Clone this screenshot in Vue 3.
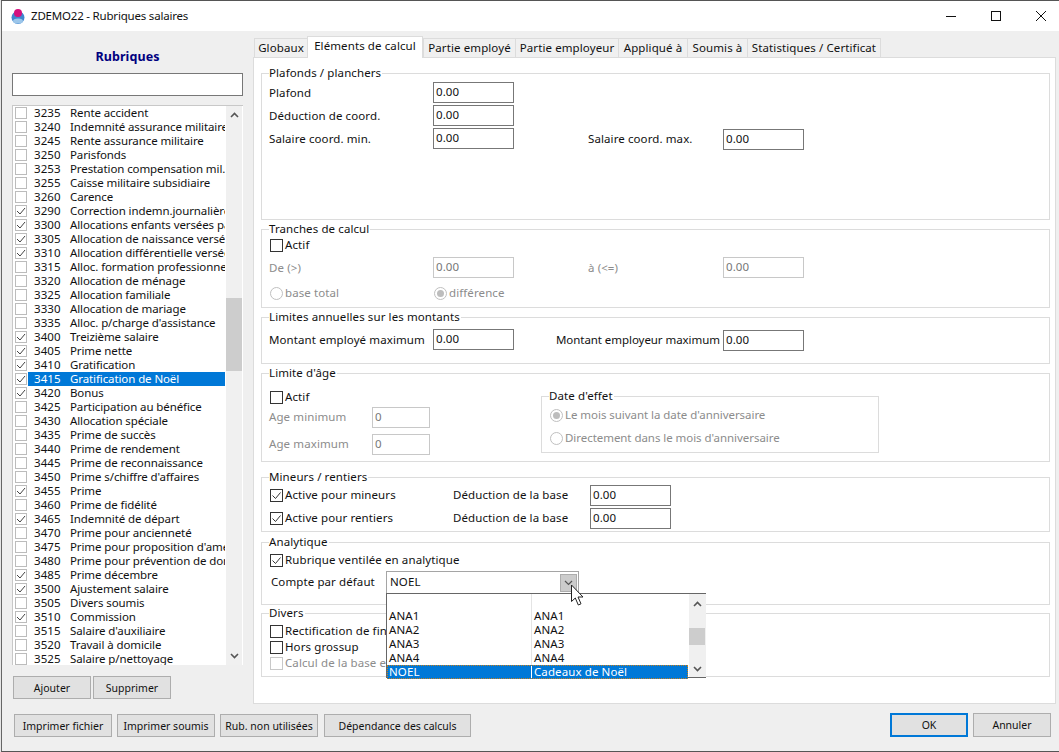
<script setup>
const rows = [
  ['3235','Rente accident',0],['3240','Indemnité assurance militaire',0],['3245','Rente assurance militaire',0],
  ['3250','Parisfonds',0],['3253','Prestation compensation mil.',0],['3255','Caisse militaire subsidiaire',0],
  ['3260','Carence',0],['3290','Correction indemn.journalière',1],['3300','Allocations enfants versées par',1],
  ['3305','Allocation de naissance versée',1],['3310','Allocation différentielle versée',1],['3315','Alloc. formation professionnelle',0],
  ['3320','Allocation de ménage',0],['3325','Allocation familiale',0],['3330','Allocation de mariage',0],
  ['3335',"Alloc. p/charge d'assistance",0],['3400','Treizième salaire',1],['3405','Prime nette',1],
  ['3410','Gratification',1],['3415','Gratification de Noël',1],['3420','Bonus',1],
  ['3425','Participation au bénéfice',0],['3430','Allocation spéciale',0],['3435','Prime de succès',0],
  ['3440','Prime de rendement',0],['3445','Prime de reconnaissance',0],['3450',"Prime s/chiffre d'affaires",0],
  ['3455','Prime',1],['3460','Prime de fidélité',0],['3465','Indemnité de départ',1],
  ['3470','Prime pour ancienneté',0],['3475',"Prime pour proposition d'amélioration",0],['3480','Prime pour prévention de dommages',0],
  ['3485','Prime décembre',1],['3500','Ajustement salaire',1],['3505','Divers soumis',0],
  ['3510','Commission',1],['3515',"Salaire d'auxiliaire",0],['3520','Travail à domicile',0],['3525','Salaire p/nettoyage',0]
]
const tabs = ['Globaux','Eléments de calcul','Partie employé','Partie employeur','Appliqué à','Soumis à','Statistiques / Certificat']
const drop = [['',''],['ANA1','ANA1'],['ANA2','ANA2'],['ANA3','ANA3'],['ANA4','ANA4']]
</script>

<template>
  <div class="app">
    <div class="window">
      <header class="titlebar">
        <svg class="logo" width="16" height="17" viewBox="0 0 16 17">
          <circle cx="8" cy="9.5" r="6.5" fill="#3f86cf"/>
          <ellipse cx="8" cy="13" rx="5" ry="2.6" fill="#9cc6ea"/>
          <circle cx="8" cy="5" r="4" fill="#d4117f"/>
        </svg>
        <span class="wintitle">ZDEMO22 - Rubriques salaires</span>
        <svg class="winbtn first" width="12" height="12" viewBox="0 0 12 12"><path d="M1 6.5H11" stroke="#111" fill="none"/></svg>
        <svg class="winbtn" width="12" height="12" viewBox="0 0 12 12"><rect x="1.5" y="1.5" width="9" height="9" stroke="#111" fill="none"/></svg>
        <svg class="winbtn" width="12" height="12" viewBox="0 0 12 12"><path d="M1 1L11 11M11 1L1 11" stroke="#111" fill="none"/></svg>
      </header>

      <div class="main">
        <aside class="left">
          <h2 class="heading">Rubriques</h2>
          <div class="search"></div>
          <div class="list">
            <div class="rows">
              <div v-for="(r, i) in rows" :key="r[0]" class="lrow">
                <span class="lcb">
                  <svg v-if="r[2]" width="10" height="10" viewBox="0 0 10 10"><path d="M1 5L4 8L9 2" stroke="#444" fill="none"/></svg>
                </span>
                <span class="litem" :class="{ sel: i === 19 }">
                  <span class="lnum">{{ r[0] }}</span><span class="lname">{{ r[1] }}</span>
                </span>
              </div>
            </div>
            <div class="vbar">
              <svg class="chev" width="9" height="6" viewBox="0 0 9 6"><path d="M1 5L4.5 1.5L8 5" stroke="#555" stroke-width="1.6" fill="none"/></svg>
              <div class="thumb"></div>
              <svg class="chev down" width="9" height="6" viewBox="0 0 9 6"><path d="M1 1L4.5 4.5L8 1" stroke="#555" stroke-width="1.6" fill="none"/></svg>
            </div>
          </div>
          <div class="leftbtns">
            <button class="btn small">Ajouter</button>
            <button class="btn small">Supprimer</button>
          </div>
        </aside>

        <section class="right">
          <nav class="tabs">
            <span v-for="(t, i) in tabs" :key="t" class="tab" :class="['t' + i, { active: i === 1 }]">{{ t }}</span>
          </nav>
          <div class="panel">
            <div class="group g1">
              <span class="legend">Plafonds / planchers</span>
              <div class="grid5 first-row"><span>Plafond</span><span class="inp">0.00</span></div>
              <div class="grid5 next"><span>Déduction de coord.</span><span class="inp">0.00</span></div>
              <div class="grid5 next">
                <span>Salaire coord. min.</span><span class="inp">0.00</span><span></span>
                <span>Salaire coord. max.</span><span class="inp low">0.00</span>
              </div>
            </div>

            <div class="group g2">
              <span class="legend">Tranches de calcul</span>
              <label class="chk top2"><span class="cb"></span>Actif</label>
              <div class="grid5 dis mt4">
                <span>De (&gt;)</span><span class="inp off">0.00</span><span></span>
                <span>à (&lt;=)</span><span class="inp off">0.00</span>
              </div>
              <div class="grid-radio dis">
                <label class="chk"><span class="rd"></span>base total</label>
                <label class="chk"><span class="rd on"></span>différence</label>
              </div>
            </div>

            <div class="group g3">
              <span class="legend">Limites annuelles sur les montants</span>
              <div class="grid3">
                <span>Montant employé maximum</span><span class="inp">0.00</span>
                <span class="lab-emp">Montant employeur maximum</span><span class="inp low">0.00</span>
              </div>
            </div>

            <div class="group g4">
              <span class="legend">Limite d'âge</span>
              <div class="age">
                <div class="agecol">
                  <label class="chk top10"><span class="cb"></span>Actif</label>
                  <div class="agerow dis first-age"><span class="up">Age minimum</span><span class="inp off">0</span></div>
                  <div class="agerow dis second-age"><span class="up">Age maximum</span><span class="inp off">0</span></div>
                </div>
                <div class="dategroup">
                  <span class="legend">Date d'effet</span>
                  <label class="chk dis d1"><span class="rd on"></span>Le mois suivant la date d'anniversaire</label>
                  <label class="chk dis d2"><span class="rd"></span>Directement dans le mois d'anniversaire</label>
                </div>
              </div>
            </div>

            <div class="group g5">
              <span class="legend">Mineurs / rentiers</span>
              <div class="gridm first-m">
                <label class="chk"><span class="cb"><svg width="11" height="11" viewBox="0 0 11 11"><path d="M1.5 5.5L4.5 8.5L9.5 2.5" stroke="#333" fill="none"/></svg></span>Active pour mineurs</label>
                <span class="up">Déduction de la base</span><span class="inp">0.00</span>
              </div>
              <div class="gridm next">
                <label class="chk"><span class="cb"><svg width="11" height="11" viewBox="0 0 11 11"><path d="M1.5 5.5L4.5 8.5L9.5 2.5" stroke="#333" fill="none"/></svg></span>Active pour rentiers</label>
                <span class="up">Déduction de la base</span><span class="inp">0.00</span>
              </div>
            </div>

            <div class="group g6">
              <span class="legend">Analytique</span>
              <label class="chk top4"><span class="cb"><svg width="11" height="11" viewBox="0 0 11 11"><path d="M1.5 5.5L4.5 8.5L9.5 2.5" stroke="#333" fill="none"/></svg></span>Rubrique ventilée en analytique</label>
              <div class="comborow">
                <span class="combolab up">Compte par défaut</span>
                <div class="combo">
                  <span class="up">NOEL</span>
                  <span class="combobtn"><svg width="9" height="6" viewBox="0 0 9 6"><path d="M1 1L4.5 4.5L8 1" stroke="#555" stroke-width="1.2" fill="none"/></svg></span>
                </div>
              </div>
            </div>

            <div class="group g7">
              <span class="legend">Divers</span>
              <label class="chk top4"><span class="cb"></span>Rectification de fin</label>
              <label class="chk gap1"><span class="cb"></span>Hors grossup</label>
              <label class="chk gap1 dis"><span class="cb offcb"></span>Calcul de la base en</label>
            </div>

            <div class="dropdown">
              <div class="dropcols">
                <div v-for="d in drop" :key="d[0]" class="drow"><span class="dc1">{{ d[0] }}</span><span class="dc2">{{ d[1] }}</span></div>
                <div class="drow dsel"><span class="dc1">NOEL</span><span class="dc2 dsep">Cadeaux de Noël</span></div>
              </div>
              <div class="dbar">
                <svg class="dchev" width="9" height="6" viewBox="0 0 9 6"><path d="M1 5L4.5 1.5L8 5" stroke="#555" stroke-width="1.6" fill="none"/></svg>
                <div class="dthumb"></div>
                <svg class="dchev ddown" width="9" height="6" viewBox="0 0 9 6"><path d="M1 1L4.5 4.5L8 1" stroke="#555" stroke-width="1.6" fill="none"/></svg>
              </div>
            </div>
            <svg class="cursor" width="15" height="23" viewBox="0 0 15 23">
              <path d="M1.5 1V17.5L5.3 14L8.3 21L11 19.8L8 13H13Z" fill="#fff" stroke="#222" stroke-width="1"/>
            </svg>
          </div>
        </section>
      </div>

      <footer class="bottom">
        <button class="btn b1">Imprimer fichier</button>
        <button class="btn b1">Imprimer soumis</button>
        <button class="btn b1">Rub. non utilisées</button>
        <button class="btn b2">Dépendance des calculs</button>
        <button class="btn ok">OK</button>
        <button class="btn cancel">Annuler</button>
      </footer>
    </div>
  </div>
</template>

<style>
html, body { margin: 0; background: #efefef; }
</style>

<style scoped>
.app {
  width: 1059px; height: 752px; overflow: hidden; background: #e6e6e6;
  font-family: "Noto Sans", "Open Sans", sans-serif; font-size: 11.5px; letter-spacing: 0.1px; line-height: 14px; color: #111;
}
.window {
  box-sizing: border-box; margin-left: 1px; width: 1058px; height: 752px; background: #efefef;
  border-left: 1px solid #666; border-top: 1px solid #555; border-bottom: 1px solid #555;
}
.titlebar { height: 30px; background: #fff; display: flex; align-items: center; padding-left: 8px; line-height: 16px; }
.logo { flex: none; }
.wintitle { margin-left: 5px; letter-spacing: -0.2px; }
.winbtn { flex: none; margin-left: 33px; }
.winbtn.first { margin-left: auto; }
.winbtn:last-child { margin-right: 12px; }

.main { display: flex; height: 673px; }
.left { width: 231px; margin-left: 10px; flex: none; }
.heading { margin: 18px 0 0; height: 16px; line-height: 16px; text-align: center; font-size: 12.5px; font-weight: 700; color: #00007f; }
.search { box-sizing: border-box; height: 23px; margin-top: 8px; background: #fff; border: 1px solid #777; }
.list { margin-top: 9px; height: 560px; display: flex; background: #fff; border-top: 1px solid #c8c8c8; border-left: 1px solid #c8c8c8; box-sizing: border-box; overflow: hidden; }
.rows { width: 213px; flex: none; overflow: hidden; letter-spacing: -0.1px; }
.lrow { height: 14px; display: flex; align-items: center; }
.lcb { box-sizing: border-box; flex: none; margin-left: 2px; width: 12px; height: 12px; border: 1px solid #bcbcbc; background: #fff; display: flex; align-items: center; justify-content: center; }
.litem { margin-left: 1px; margin-right: 1px; flex: 1; height: 14px; line-height: 14px; min-width: 0; padding-left: 6px; display: flex; white-space: nowrap; overflow: hidden; }
.litem.sel { background: #0078d7; color: #fff; }
.lnum { flex: none; width: 36px; letter-spacing: 0.1px; }
.lname { flex: none; }
.vbar { width: 16px; flex: none; background: #f0f0f0; display: flex; flex-direction: column; align-items: center; position: relative; }
.chev { margin-top: 6px; flex: none; }
.thumb { position: absolute; left: 0; right: 0; top: 192px; height: 73px; background: #cdcdcd; }
.chev.down { margin-top: auto; margin-bottom: 6px; }
.leftbtns { margin: 11px 0 0 1px; display: flex; gap: 2px; }

.btn {
  box-sizing: border-box; font: inherit; font-size: 10.5px; letter-spacing: 0; color: #111; padding: 0; background: #e1e1e1;
  border: 1px solid #adadad; height: 23px; display: block; white-space: nowrap;
}
.small { width: 78px; }
.bottom { display: flex; align-items: flex-start; padding: 10px 8px 0 12px; gap: 5px; }
.b1 { width: 98px; }
.b2 { width: 147px; margin-left: 1px; }
.ok { width: 78px; height: 24px; margin-left: auto; margin-top: -1px; border: 2px solid #0078d7; }
.cancel { width: 78px; height: 24px; margin-top: -1px; }

.right { margin-left: 10px; width: 803px; flex: none; padding-top: 5px; }
.tabs { display: flex; align-items: flex-end; height: 21px; padding-left: 1px; }
.tab { box-sizing: border-box; height: 19px; line-height: 17px; background: #f0f0f0; border: 1px solid #dcdcdc; border-bottom: 0; border-right: 0; text-align: center; white-space: nowrap; }
.tab.active { background: #fff; line-height: 17px; border-right: 1px solid #dcdcdc; margin-bottom: -1px; position: relative; z-index: 1; height: 22px; }
.t0 { width: 53px; } .t1 { width: 116px; } .t2 { width: 92px; } .t3 { width: 103px; }
.t4 { width: 69px; } .t5 { width: 60px; } .t6 { width: 134px; border-right: 1px solid #dcdcdc; }
.panel { box-sizing: border-box; height: 647px; background: #fff; border: 1px solid #dcdcdc; padding: 15px 0 0 7px; position: relative; }

.group { box-sizing: border-box; width: 789px; border: 1px solid #dcdcdc; padding-left: 7px; }
.legend { display: block; width: fit-content; height: 14px; line-height: 14px; margin: -8px 0 0 0; background: #fff; padding-right: 1px; color: #111; }
.g1 { height: 147px; margin-bottom: 9px; }
.g2 { height: 79px; margin-bottom: 9px; }
.g3 { height: 47px; margin-bottom: 9px; }
.g4 { height: 89px; margin-bottom: 15px; }
.g5 { height: 55px; margin-bottom: 10px; }
.g6 { height: 63px; margin-bottom: 8px; }
.g7 { height: 64px; }

.grid5 { display: grid; grid-template-columns: 164px 81px 74px 135px 81px; align-items: center; height: 21px; }
.first-row { margin-top: 2px; }
.first-m { margin-top: 1px; }
.next { margin-top: 2px; }
.mt4 { margin-top: 4px; }
.up { padding-bottom: 2px; }
.inp { box-sizing: border-box; display: block; height: 21px; line-height: 17px; border: 1px solid #777; background: #fff; padding-left: 2px; }
.inp.off { border-color: #c8c8c8; color: #777; background: #fff; }
.low { position: relative; top: 1px; }
.dis { color: #8c8c8c; }
.chk { display: flex; align-items: flex-start; height: 15px; line-height: 13px; white-space: nowrap; padding-left: 1px; }
.top2 { margin-top: 2px; }
.top10 { margin-top: 10px; }
.top4 { margin-top: 4px; }
.gap1 { margin-top: 1px; }
.cb { box-sizing: border-box; flex: none; width: 13px; height: 13px; margin: 1px 2px 0 0; border: 1px solid #333; background: #fff; display: flex; align-items: center; justify-content: center; }
.offcb { border-color: #c8c8c8; }
.rd { box-sizing: border-box; flex: none; width: 13px; height: 13px; margin: 1px 2px 0 0; border: 1px solid #c0c0c0; border-radius: 50%; background: #fff; position: relative; }
.rd.on::after { content: ""; position: absolute; left: 2px; top: 2px; width: 7px; height: 7px; border-radius: 50%; background: #bdbdbd; }
.grid-radio { display: grid; grid-template-columns: 164px auto; margin-top: 8px; }
.grid3 { display: grid; grid-template-columns: 164px 81px 42px 167px 81px; align-items: center; height: 21px; margin-top: 5px; white-space: nowrap; }
.lab-emp { grid-column: 4; letter-spacing: -0.06px; }
.grid3 > .inp:last-child { grid-column: 5; }

.age { display: flex; }
.agecol { width: 272px; flex: none; }
.agerow { display: grid; grid-template-columns: 103px 58px; align-items: center; height: 21px; }
.first-age { margin-top: 2px; }
.second-age { margin-top: 6px; }
.dategroup { box-sizing: border-box; width: 338px; height: 57px; margin-top: 16px; border: 1px solid #dcdcdc; padding-left: 7px; }
.d1 { margin-top: 5px; letter-spacing: -0.05px; }
.d2 { margin-top: 8px; letter-spacing: -0.05px; }

.gridm { display: grid; grid-template-columns: 184px 137px 81px; align-items: center; height: 21px; }
.comborow { display: flex; align-items: center; margin-top: 3px; height: 23px; }
.combolab { width: 117px; padding-left: 2px; box-sizing: border-box; flex: none; }
.combo { box-sizing: border-box; width: 193px; height: 23px; border: 1px solid #a5a5a5; background: #fff; display: flex; align-items: center; padding-left: 3px; }
.combobtn { box-sizing: border-box; margin-left: auto; margin-right: 1px; width: 17px; height: 18px; background: #ccc; border: 1px solid #adadad; display: flex; align-items: center; justify-content: center; }

.dropdown { box-sizing: border-box; position: absolute; left: 132px; top: 535px; width: 320px; height: 85px; background: #fff; border: 1px solid #666; display: flex; z-index: 2; }
.dropcols { width: 301px; flex: none; position: relative; background: linear-gradient(#e4e4e4, #e4e4e4) 144px 0 / 1px 100% no-repeat; }
.drow { height: 14px; display: flex; white-space: nowrap; }
.drow:first-child { height: 15px; }
.dc1 { width: 145px; flex: none; padding-left: 2px; box-sizing: border-box; }
.dc2 { padding-left: 2px; }
.dsel { background: #0078d7; color: #fff; outline: 1px dotted #c77f1c; outline-offset: -1px; }
.dsep { border-left: 1px solid #fff; margin-left: -1px; padding-left: 2px; }
.dbar { width: 17px; flex: none; background: #f0f0f0; margin-left: 1px; display: flex; flex-direction: column; align-items: center; position: relative; }
.dchev { margin-top: 7px; }
.ddown { margin-top: auto; margin-bottom: 5px; }
.dthumb { position: absolute; left: 0; right: 1px; top: 34px; height: 17px; background: #cdcdcd; }
.cursor { position: absolute; left: 316px; top: 526px; z-index: 3; }
</style>
